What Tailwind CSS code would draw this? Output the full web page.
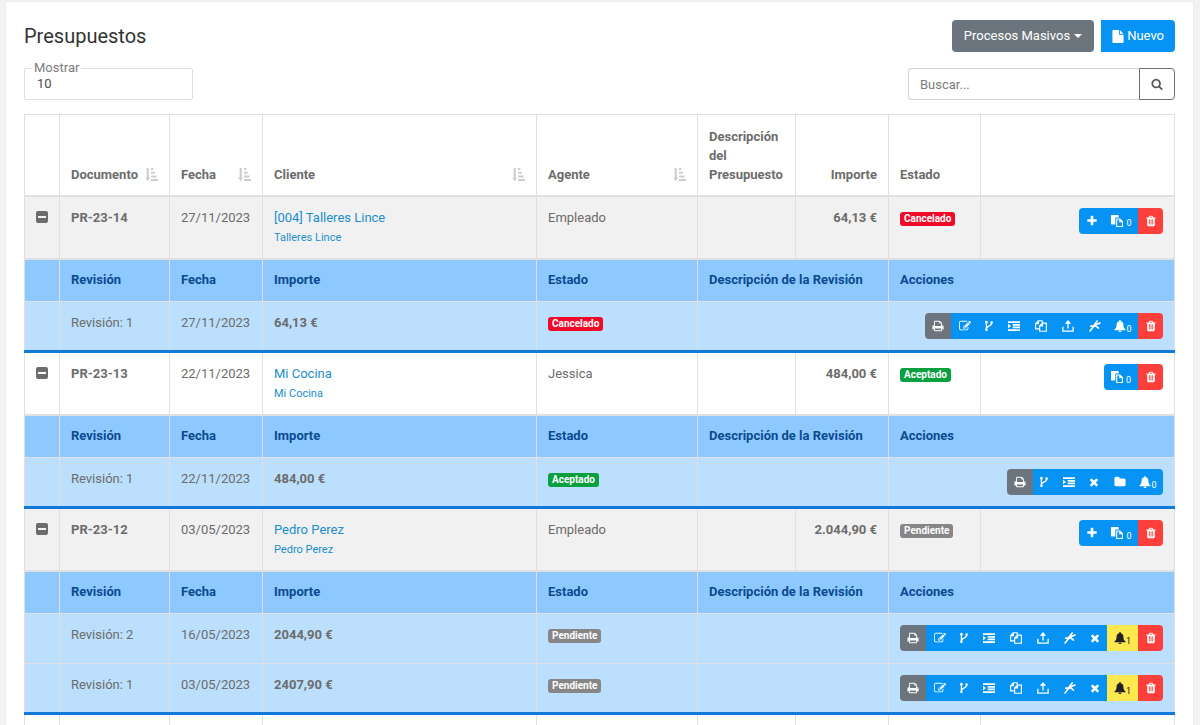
<!DOCTYPE html>
<html lang="es">
<head>
    <meta charset="UTF-8">
    <meta name="viewport" content="width=device-width, initial-scale=1.0">
    <title>Presupuestos</title>
    <script src="https://cdn.jsdelivr.net/npm/@tailwindcss/browser@4"></script>
</head>

<body class="bg-[#f2f2f5] font-['Roboto',sans-serif] text-[13px] leading-5 text-[#6c6c6c] overflow-x-hidden">

    <!-- icon sprite -->
    <svg class="hidden" xmlns="http://www.w3.org/2000/svg">
        <symbol id="i-search" viewBox="0 0 1792 1792"><path d="M1216 832q0-185-131.5-316.5t-316.5-131.5-316.5 131.5-131.5 316.5 131.5 316.5 316.5 131.5 316.5-131.5 131.5-316.5zm512 832q0 52-38 90t-90 38q-54 0-90-38l-343-342q-179 124-399 124-143 0-273.5-55.5t-225-150-150-225-55.5-273.5 55.5-273.5 150-225 225-150 273.5-55.5 273.5 55.5 225 150 150 225 55.5 273.5q0 220-124 399l343 343q37 37 37 90z"/></symbol>
        <symbol id="i-plus" viewBox="0 0 1792 1792"><path d="M1600 736v192q0 40-28 68t-68 28h-416v416q0 40-28 68t-68 28h-192q-40 0-68-28t-28-68v-416h-416q-40 0-68-28t-28-68v-192q0-40 28-68t68-28h416v-416q0-40 28-68t68-28h192q40 0 68 28t28 68v416h416q40 0 68 28t28 68z"/></symbol>
        <symbol id="i-trash" viewBox="0 0 1792 1792"><path d="M704 1376v-704q0-14-9-23t-23-9h-64q-14 0-23 9t-9 23v704q0 14 9 23t23 9h64q14 0 23-9t9-23zm256 0v-704q0-14-9-23t-23-9h-64q-14 0-23 9t-9 23v704q0 14 9 23t23 9h64q14 0 23-9t9-23zm256 0v-704q0-14-9-23t-23-9h-64q-14 0-23 9t-9 23v704q0 14 9 23t23 9h64q14 0 23-9t9-23zm-544-992h448l-48-117q-7-9-17-11h-317q-10 2-17 11zm928 32v64q0 14-9 23t-23 9h-96v948q0 83-47 143.5t-113 60.5h-832q-66 0-113-58.5t-47-141.5v-952h-96q-14 0-23-9t-9-23v-64q0-14 9-23t23-9h309l70-167q15-37 54-63t79-26h320q40 0 79 26t54 63l70 167h309q14 0 23 9t9 23z"/></symbol>
        <symbol id="i-times" viewBox="0 0 1792 1792"><path d="M1490 1322q0 40-28 68l-136 136q-28 28-68 28t-68-28l-294-294-294 294q-28 28-68 28t-68-28l-136-136q-28-28-28-68t28-68l294-294-294-294q-28-28-28-68t28-68l136-136q28-28 68-28t68 28l294 294 294-294q28-28 68-28t68 28l136 136q28 28 28 68t-28 68l-294 294 294 294q28 28 28 68z"/></symbol>
        <symbol id="i-folder" viewBox="0 0 1792 1792"><path d="M1728 608v704q0 92-66 158t-158 66h-1216q-92 0-158-66t-66-158v-960q0-92 66-158t158-66h320q92 0 158 66t66 158v32h672q92 0 158 66t66 158z"/></symbol>
        <symbol id="i-print" viewBox="0 0 1792 1792"><path d="M448 1536h896v-256h-896v256zm0-640h896v-384h-160q-40 0-68-28t-28-68v-160h-640v640zm1152 64q0-26-19-45t-45-19-45 19-19 45 19 45 45 19 45-19 19-45zm128 0v416q0 13-9.5 22.5t-22.5 9.5h-224v160q0 40-28 68t-68 28h-960q-40 0-68-28t-28-68v-160h-224q-13 0-22.5-9.5t-9.5-22.5v-416q0-79 56.5-135.5t135.5-56.5h64v-544q0-40 28-68t68-28h672q40 0 88 20t76 48l152 152q28 28 48 76t20 88v256h64q79 0 135.5 56.5t56.5 135.5z"/></symbol>
        <symbol id="i-edit" viewBox="0 0 1792 1792"><path d="M888 1184l116-116-152-152-116 116v56h96v96h56zm440-720q-16-16-33 1l-350 350q-17 17-1 33t33-1l350-350q17-17 1-33zm80 594v190q0 119-84.5 203.5t-203.5 84.5h-832q-119 0-203.5-84.5t-84.5-203.5v-832q0-119 84.5-203.5t203.5-84.5h832q63 0 117 25 15 7 18 23 3 17-9 29l-49 49q-14 14-32 8-23-6-45-6h-832q-66 0-113 47t-47 113v832q0 66 47 113t113 47h832q66 0 113-47t47-113v-126q0-13 9-22l64-64q15-15 35-7t20 29zm-96-738l288 288-672 672h-288v-288zm444 132l-92 92-288-288 92-92q28-28 68-28t68 28l152 152q28 28 28 68t-28 68z"/></symbol>
        <symbol id="i-fork" viewBox="0 0 14 14"><path fill="none" stroke="currentColor" stroke-width="1.6" d="M4 2.500v9M10 3v1.500C10 7.500 4 7 4 10"/><circle cx="4" cy="2.500" r="1.500"/><circle cx="4" cy="11.500" r="1.500"/><circle cx="10" cy="3" r="1.500"/></symbol>
        <symbol id="i-indent" viewBox="0 0 14 14"><path d="M0 1.500h14v2H0zM5.500 4.700H14v2H5.500zM5.500 7.500H14v2H5.500zM0 10.700h14v2H0zM0 4.300l3.500 2.800L0 9.900z"/></symbol>
        <symbol id="i-files" viewBox="0 0 14 14"><path fill="none" stroke="currentColor" stroke-width="1.400" stroke-linejoin="round" d="M5.300 10.400H.7V4.200L4 .9h4.400v2.700M4 .9v3.300H.7M5.400 6.900L8.700 3.600h4.600v9.500H5.400zM8.700 3.600v3.300H5.400"/></symbol>
        <symbol id="i-upload" viewBox="0 0 14 14"><path fill="none" stroke="currentColor" stroke-width="1.500" d="M1 8v5h12V8M7 10V2.500"/><path d="M7 0l3.700 4.300H3.300z"/></symbol>
        <symbol id="i-sign" viewBox="0 0 14 14"><path fill="none" stroke="currentColor" stroke-width="1.900" stroke-linecap="round" stroke-linejoin="round" d="M1.200 12.800L4.800 8.200M2 7.200l3.200-.2L9.500 1.200M6.500 6l6.300-2.500M5 8l3-1.200 3 2.600"/></symbol>
        <symbol id="i-bell" viewBox="0 0 14 14"><path d="M7 0c.6 0 1 .4 1 1v.5c2 .5 3 2 3 4 0 3 1 4.500 2.500 5.500v1H.5v-1C2 10 3 8.500 3 5.500c0-2 1-3.500 3-4V1c0-.6.4-1 1-1zM5.200 12.500h3.600C8.700 13.400 8 14 7 14s-1.700-.6-1.800-1.500z"/></symbol>
        <symbol id="i-paste" viewBox="0 0 14 14"><path d="M.8 0h7.400c.4 0 .8.400.8.800V3H6.200C5.500 3 5 3.500 5 4.200V11H.8C.4 11 0 10.600 0 10.200V.8C0 .4.4 0 .8 0z"/><path fill-rule="evenodd" d="M6.700 4h4l3.300 3.300v6c0 .4-.3.700-.7.700H6.700c-.4 0-.7-.3-.7-.7V4.700c0-.4.300-.7.700-.7zm.6 1.300v7.400h5.400V8.500H9.500V5.300z"/></symbol>
        <symbol id="i-file" viewBox="0 0 12 14"><path d="M.8 0H7v4.200c0 .4.400.8.800.8H12v8.200c0 .4-.4.800-.8.800H.8c-.4 0-.8-.4-.8-.8V.8C0 .4.4 0 .8 0zM8 .1L11.900 4H8z"/></symbol>
        <symbol id="i-sort" viewBox="0 0 14 14"><path d="M1.800 0h2.200v10.500h1.700L2.900 14 .1 10.500h1.700zM6.500 0h2.500v2.200H6.500zM6.500 4H10.500v2.200H6.500zM6.500 8h6v2.200H6.500zM6.500 11.800H14V14H6.500z"/></symbol>
        <symbol id="i-minus" viewBox="0 0 12 12"><path fill-rule="evenodd" d="M2 0h8a2 2 0 0 1 2 2v8a2 2 0 0 1-2 2H2a2 2 0 0 1-2-2V2a2 2 0 0 1 2-2zm0 5v2h8V5z"/></symbol>
    </svg>

    <main class="bg-white border border-[#ebebee] mt-px ml-[5px] mr-[6px] px-[18px] pt-[18px] min-h-screen">
        <div class="flex justify-between items-start">
            <h1 class="text-xl leading-8 text-[#333]">Presupuestos</h1>
            <div class="flex gap-[7px]">
                <button type="button" class="h-8 px-3 flex items-center gap-1 rounded-sm bg-[#6c757d] text-white">
                    Procesos Masivos
                    <span class="border-x-4 border-x-transparent border-t-4 border-t-white"></span>
                </button>
                <button type="button" class="h-8 px-[11px] flex items-center gap-[3px] rounded-r-sm bg-[#0693f3] text-white">
                    <svg class="w-3 h-[13px] fill-current"><use href="#i-file"/></svg>
                    Nuevo
                </button>
            </div>
        </div>

        <div class="flex justify-between mt-4">
            <div class="relative">
                <label for="mostrar" class="absolute left-2 -top-2 px-[2px] leading-4 bg-white text-[#7c7c7c]">Mostrar</label>
                <select id="mostrar" class="appearance-none w-[169px] h-8 px-3 border border-[#dedede] rounded-xs text-[#4c4c4c]">
                    <option>10</option>
                    <option>25</option>
                    <option>50</option>
                </select>
            </div>
            <form class="flex w-[267px]">
                <input type="text" aria-label="Buscar" placeholder="Buscar..." class="grow min-w-0 h-8 px-[11px] border border-r-0 border-[#d2d2d2] rounded-l-sm placeholder:text-[#7c7c7c]">
                <button type="button" aria-label="Buscar" class="w-9 h-8 flex items-center justify-center border border-[#6f6f6f] rounded-r-sm">
                    <svg class="size-3 fill-[#555]"><use href="#i-search"/></svg>
                </button>
            </form>
        </div>

        <table class="mt-[14px] w-full table-fixed border-collapse text-left [&_td]:border [&_th]:border [&_td]:border-[#dee0e3] [&_th]:border-[#dee0e3] [&_td]:px-[11px] [&_th]:px-[11px] [&_td]:pt-[11px] [&_td]:align-top [&_th]:font-bold [&_button]:h-[26px] [&_button]:flex [&_button]:items-center [&_button]:justify-center [&_svg]:size-3 [&_svg]:fill-current">
            <colgroup>
                <col class="w-[35px]">
                <col class="w-[110px]">
                <col class="w-[93px]">
                <col>
                <col class="w-[161px]">
                <col class="w-[98px]">
                <col class="w-[93px]">
                <col class="w-[92px]">
                <col class="w-[194px]">
            </colgroup>
            <thead>
                <tr class="h-[81px] leading-[19px] [&_th]:align-bottom [&_th]:pb-[11px] [&_th]:border-b-2 [&_svg]:w-[13px] [&_svg]:h-[13px]">
                    <th></th>
                    <th><div class="flex justify-between items-center">Documento <svg class="text-[#ccc]"><use href="#i-sort"/></svg></div></th>
                    <th><div class="flex justify-between items-center">Fecha <svg class="text-[#ccc]"><use href="#i-sort"/></svg></div></th>
                    <th><div class="flex justify-between items-center">Cliente <svg class="text-[#ccc]"><use href="#i-sort"/></svg></div></th>
                    <th><div class="flex justify-between items-center">Agente <svg class="text-[#ccc]"><use href="#i-sort"/></svg></div></th>
                    <th>Descripción del Presupuesto</th>
                    <th class="text-right">Importe</th>
                    <th>Estado</th>
                    <th></th>
                </tr>
            </thead>

            <!-- PR-23-14 -->
            <tbody>
                <tr class="h-[63px] bg-[#f1f1f1]">
                    <td><button type="button" aria-label="Contraer" class="-mt-1"><svg><use href="#i-minus"/></svg></button></td>
                    <td class="font-bold">PR-23-14</td>
                    <td>27/11/2023</td>
                    <td><a href="#" class="block text-[#1b8ecb]">[004] Talleres Lince</a><a href="#" class="block text-[11px] text-[#1b8ecb]">Talleres Lince</a></td>
                    <td>Empleado</td>
                    <td></td>
                    <td class="text-right font-bold">64,13 €</td>
                    <td><span class="inline-block px-1 rounded-[3px] bg-[#f00a28] text-white text-[10px] leading-[14px] font-bold">Cancelado</span></td>
                    <td>
                        <div class="flex justify-end text-white">
                            <button type="button" aria-label="Añadir" class="w-[26px] rounded-l-sm bg-[#0693f3]"><svg><use href="#i-plus"/></svg></button>
                            <button type="button" aria-label="Copiar" class="w-[33px] bg-[#0693f3]"><svg><use href="#i-paste"/></svg><span class="text-[9px] pl-[3px] pt-[5px]">0</span></button>
                            <button type="button" aria-label="Eliminar" class="w-[25px] rounded-r-sm bg-[#fd3f3c]"><svg><use href="#i-trash"/></svg></button>
                        </div>
                    </td>
                </tr>
                <tr class="h-[43px] bg-[#8dc9ff] text-[#0b4a8f] [&_th]:border-[#cfe1f1] [&_th]:border-t-2">
                    <th></th>
                    <th>Revisión</th>
                    <th>Fecha</th>
                    <th>Importe</th>
                    <th>Estado</th>
                    <th colspan="2">Descripción de la Revisión</th>
                    <th colspan="2">Acciones</th>
                </tr>
                <tr class="h-[50px] bg-[#bbdffd] border-b-3 border-[#1379d8] [&_td]:border-[#d5e3ef] [&_td]:border-b-0">
                    <td></td>
                    <td>Revisión: 1</td>
                    <td>27/11/2023</td>
                    <td class="font-bold">64,13 €</td>
                    <td><span class="inline-block px-1 rounded-[3px] bg-[#f00a28] text-white text-[10px] leading-[14px] font-bold">Cancelado</span></td>
                    <td colspan="2"></td>
                    <td colspan="2">
                        <div class="flex justify-end text-white">
                            <button type="button" aria-label="Imprimir" class="w-[26px] rounded-l-sm bg-[#6c757d]"><svg><use href="#i-print"/></svg></button>
                            <button type="button" aria-label="Editar" class="w-[27px] bg-[#0693f3]"><svg><use href="#i-edit"/></svg></button>
                            <button type="button" aria-label="Bifurcar" class="w-[22px] bg-[#0693f3]"><svg><use href="#i-fork"/></svg></button>
                            <button type="button" aria-label="Detalle" class="w-[27px] bg-[#0693f3]"><svg><use href="#i-indent"/></svg></button>
                            <button type="button" aria-label="Duplicar" class="w-[27px] bg-[#0693f3]"><svg><use href="#i-files"/></svg></button>
                            <button type="button" aria-label="Exportar" class="w-[27px] bg-[#0693f3]"><svg><use href="#i-upload"/></svg></button>
                            <button type="button" aria-label="Aceptar" class="w-[27px] bg-[#0693f3]"><svg><use href="#i-sign"/></svg></button>
                            <button type="button" aria-label="Avisos" class="w-[30px] bg-[#0693f3]"><svg><use href="#i-bell"/></svg><span class="text-[9px] pt-[5px]">0</span></button>
                            <button type="button" aria-label="Eliminar" class="w-[25px] rounded-r-sm bg-[#fd3f3c]"><svg><use href="#i-trash"/></svg></button>
                        </div>
                    </td>
                </tr>
            </tbody>

            <!-- PR-23-13 -->
            <tbody>
                <tr class="h-[63px] bg-white">
                    <td><button type="button" aria-label="Contraer" class="-mt-1"><svg><use href="#i-minus"/></svg></button></td>
                    <td class="font-bold">PR-23-13</td>
                    <td>22/11/2023</td>
                    <td><a href="#" class="block text-[#1b8ecb]">Mi Cocina</a><a href="#" class="block text-[11px] text-[#1b8ecb]">Mi Cocina</a></td>
                    <td>Jessica</td>
                    <td></td>
                    <td class="text-right font-bold">484,00 €</td>
                    <td><span class="inline-block px-1 rounded-[3px] bg-[#0a9f3f] text-white text-[10px] leading-[14px] font-bold">Aceptado</span></td>
                    <td>
                        <div class="flex justify-end text-white">
                            <button type="button" aria-label="Copiar" class="w-[34px] rounded-l-sm bg-[#0693f3]"><svg><use href="#i-paste"/></svg><span class="text-[9px] pl-[3px] pt-[5px]">0</span></button>
                            <button type="button" aria-label="Eliminar" class="w-[25px] rounded-r-sm bg-[#fd3f3c]"><svg><use href="#i-trash"/></svg></button>
                        </div>
                    </td>
                </tr>
                <tr class="h-[43px] bg-[#8dc9ff] text-[#0b4a8f] [&_th]:border-[#cfe1f1] [&_th]:border-t-2">
                    <th></th>
                    <th>Revisión</th>
                    <th>Fecha</th>
                    <th>Importe</th>
                    <th>Estado</th>
                    <th colspan="2">Descripción de la Revisión</th>
                    <th colspan="2">Acciones</th>
                </tr>
                <tr class="h-[50px] bg-[#bbdffd] border-b-3 border-[#1379d8] [&_td]:border-[#d5e3ef] [&_td]:border-b-0">
                    <td></td>
                    <td>Revisión: 1</td>
                    <td>22/11/2023</td>
                    <td class="font-bold">484,00 €</td>
                    <td><span class="inline-block px-1 rounded-[3px] bg-[#0a9f3f] text-white text-[10px] leading-[14px] font-bold">Aceptado</span></td>
                    <td colspan="2"></td>
                    <td colspan="2">
                        <div class="flex justify-end text-white">
                            <button type="button" aria-label="Imprimir" class="w-[26px] rounded-l-sm bg-[#6c757d]"><svg><use href="#i-print"/></svg></button>
                            <button type="button" aria-label="Bifurcar" class="w-[22px] bg-[#0693f3]"><svg><use href="#i-fork"/></svg></button>
                            <button type="button" aria-label="Detalle" class="w-[27px] bg-[#0693f3]"><svg><use href="#i-indent"/></svg></button>
                            <button type="button" aria-label="Cancelar" class="w-6 bg-[#0693f3]"><svg><use href="#i-times"/></svg></button>
                            <button type="button" aria-label="Carpeta" class="w-[27px] bg-[#0693f3]"><svg><use href="#i-folder"/></svg></button>
                            <button type="button" aria-label="Avisos" class="w-[30px] rounded-r-sm bg-[#0693f3]"><svg><use href="#i-bell"/></svg><span class="text-[9px] pt-[5px]">0</span></button>
                        </div>
                    </td>
                </tr>
            </tbody>

            <!-- PR-23-12 -->
            <tbody>
                <tr class="h-[63px] bg-[#f1f1f1]">
                    <td><button type="button" aria-label="Contraer" class="-mt-1"><svg><use href="#i-minus"/></svg></button></td>
                    <td class="font-bold">PR-23-12</td>
                    <td>03/05/2023</td>
                    <td><a href="#" class="block text-[#1b8ecb]">Pedro Perez</a><a href="#" class="block text-[11px] text-[#1b8ecb]">Pedro Perez</a></td>
                    <td>Empleado</td>
                    <td></td>
                    <td class="text-right font-bold">2.044,90 €</td>
                    <td><span class="inline-block px-1 rounded-[3px] bg-[#868686] text-white text-[10px] leading-[14px] font-bold">Pendiente</span></td>
                    <td>
                        <div class="flex justify-end text-white">
                            <button type="button" aria-label="Añadir" class="w-[26px] rounded-l-sm bg-[#0693f3]"><svg><use href="#i-plus"/></svg></button>
                            <button type="button" aria-label="Copiar" class="w-[33px] bg-[#0693f3]"><svg><use href="#i-paste"/></svg><span class="text-[9px] pl-[3px] pt-[5px]">0</span></button>
                            <button type="button" aria-label="Eliminar" class="w-[25px] rounded-r-sm bg-[#fd3f3c]"><svg><use href="#i-trash"/></svg></button>
                        </div>
                    </td>
                </tr>
                <tr class="h-[43px] bg-[#8dc9ff] text-[#0b4a8f] [&_th]:border-[#cfe1f1] [&_th]:border-t-2">
                    <th></th>
                    <th>Revisión</th>
                    <th>Fecha</th>
                    <th>Importe</th>
                    <th>Estado</th>
                    <th colspan="2">Descripción de la Revisión</th>
                    <th colspan="2">Acciones</th>
                </tr>
                <tr class="h-[50px] bg-[#bbdffd] [&_td]:border-[#d5e3ef]">
                    <td></td>
                    <td>Revisión: 2</td>
                    <td>16/05/2023</td>
                    <td class="font-bold">2044,90 €</td>
                    <td><span class="inline-block px-1 rounded-[3px] bg-[#868686] text-white text-[10px] leading-[14px] font-bold">Pendiente</span></td>
                    <td colspan="2"></td>
                    <td colspan="2">
                        <div class="flex justify-end text-white">
                            <button type="button" aria-label="Imprimir" class="w-[26px] rounded-l-sm bg-[#6c757d]"><svg><use href="#i-print"/></svg></button>
                            <button type="button" aria-label="Editar" class="w-[27px] bg-[#0693f3]"><svg><use href="#i-edit"/></svg></button>
                            <button type="button" aria-label="Bifurcar" class="w-[22px] bg-[#0693f3]"><svg><use href="#i-fork"/></svg></button>
                            <button type="button" aria-label="Detalle" class="w-[27px] bg-[#0693f3]"><svg><use href="#i-indent"/></svg></button>
                            <button type="button" aria-label="Duplicar" class="w-[27px] bg-[#0693f3]"><svg><use href="#i-files"/></svg></button>
                            <button type="button" aria-label="Exportar" class="w-[27px] bg-[#0693f3]"><svg><use href="#i-upload"/></svg></button>
                            <button type="button" aria-label="Aceptar" class="w-[27px] bg-[#0693f3]"><svg><use href="#i-sign"/></svg></button>
                            <button type="button" aria-label="Cancelar" class="w-6 bg-[#0693f3]"><svg><use href="#i-times"/></svg></button>
                            <button type="button" aria-label="Avisos" class="w-[31px] bg-[#ffe94f] text-[#222]"><svg><use href="#i-bell"/></svg><span class="text-[9px] pt-[5px]">1</span></button>
                            <button type="button" aria-label="Eliminar" class="w-[25px] rounded-r-sm bg-[#fd3f3c]"><svg><use href="#i-trash"/></svg></button>
                        </div>
                    </td>
                </tr>
                <tr class="h-[50px] bg-[#bbdffd] border-b-3 border-[#1379d8] [&_td]:border-[#d5e3ef] [&_td]:border-b-0">
                    <td></td>
                    <td>Revisión: 1</td>
                    <td>03/05/2023</td>
                    <td class="font-bold">2407,90 €</td>
                    <td><span class="inline-block px-1 rounded-[3px] bg-[#868686] text-white text-[10px] leading-[14px] font-bold">Pendiente</span></td>
                    <td colspan="2"></td>
                    <td colspan="2">
                        <div class="flex justify-end text-white">
                            <button type="button" aria-label="Imprimir" class="w-[26px] rounded-l-sm bg-[#6c757d]"><svg><use href="#i-print"/></svg></button>
                            <button type="button" aria-label="Editar" class="w-[27px] bg-[#0693f3]"><svg><use href="#i-edit"/></svg></button>
                            <button type="button" aria-label="Bifurcar" class="w-[22px] bg-[#0693f3]"><svg><use href="#i-fork"/></svg></button>
                            <button type="button" aria-label="Detalle" class="w-[27px] bg-[#0693f3]"><svg><use href="#i-indent"/></svg></button>
                            <button type="button" aria-label="Duplicar" class="w-[27px] bg-[#0693f3]"><svg><use href="#i-files"/></svg></button>
                            <button type="button" aria-label="Exportar" class="w-[27px] bg-[#0693f3]"><svg><use href="#i-upload"/></svg></button>
                            <button type="button" aria-label="Aceptar" class="w-[27px] bg-[#0693f3]"><svg><use href="#i-sign"/></svg></button>
                            <button type="button" aria-label="Cancelar" class="w-6 bg-[#0693f3]"><svg><use href="#i-times"/></svg></button>
                            <button type="button" aria-label="Avisos" class="w-[31px] bg-[#ffe94f] text-[#222]"><svg><use href="#i-bell"/></svg><span class="text-[9px] pt-[5px]">1</span></button>
                            <button type="button" aria-label="Eliminar" class="w-[25px] rounded-r-sm bg-[#fd3f3c]"><svg><use href="#i-trash"/></svg></button>
                        </div>
                    </td>
                </tr>
            </tbody>

            <tbody>
                <tr class="h-[63px] bg-white">
                    <td></td><td></td><td></td><td></td><td></td><td></td><td></td><td></td><td></td>
                </tr>
            </tbody>
        </table>
    </main>

</body>
</html>
